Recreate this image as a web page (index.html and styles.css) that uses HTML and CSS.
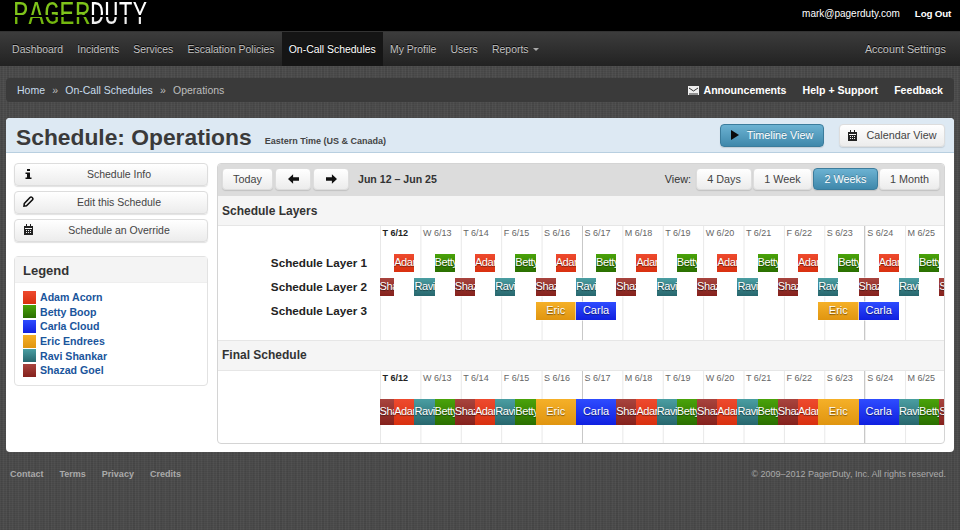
FILE: index.html
```html
<!DOCTYPE html>
<html lang="en">
<head>
    <meta charset="UTF-8">
    <title>Schedule: Operations - PagerDuty</title>
    <link rel="stylesheet" href="styles.css">
</head>
<body>

<!-- Top bar -->
<div class="topbar">
    <div class="logo"><span class="logo-pager">PAGER</span><span class="logo-duty">DUTY</span></div>
    <div class="user">
        <a href="#" class="user-mail">mark@pagerduty.com</a>
        <a href="#" class="logout">Log Out</a>
    </div>
</div>

<!-- Main nav -->
<div class="nav">
    <a href="#">Dashboard</a>
    <a href="#">Incidents</a>
    <a href="#">Services</a>
    <a href="#">Escalation Policies</a>
    <a href="#" class="active">On-Call Schedules</a>
    <a href="#">My Profile</a>
    <a href="#">Users</a>
    <a href="#">Reports <span class="caret"></span></a>
    <a href="#" class="nav-right">Account Settings</a>
</div>

<!-- Breadcrumb -->
<div class="crumbs">
    <a href="#">Home</a><span class="sep">»</span>
    <a href="#">On-Call Schedules</a><span class="sep">»</span>
    <span class="current">Operations</span>
    <div class="crumb-links">
        <a href="#">
            <svg class="mail-icon" width="11" height="9" viewBox="0 0 11 9"><path fill="#eee" d="M0 0h11v9H0z"/><path fill="none" stroke="#333" d="M1 2l4.500 3L10 2M1 8h9"/></svg>Announcements</a>
        <a href="#">Help + Support</a>
        <a href="#">Feedback</a>
    </div>
</div>

<div class="card">
    <div class="card-head">
        <h1>Schedule: Operations</h1>
        <span class="timezone">Eastern Time (US &amp; Canada)</span>
        <div class="view-switch">
            <a href="#" class="btn btn-blue btn-timeline">
                <svg width="8" height="10" viewBox="0 0 8 10"><path fill="#0a0a0a" d="M0 0l8 5-8 5z"/></svg>Timeline View</a>
            <a href="#" class="btn btn-calendar">
                <svg width="11" height="11" viewBox="0 0 11 11"><path fill="#222" d="M1 2h2V0h1v2h3V0h1v2h2v9H1zM2 4v1h7V4zM3 6v1h1V6zm2 0v1h1V6zm2 0v1h1V6zM3 8v1h1V8zm2 0v1h1V8zm2 0v1h1V8z"/></svg>Calendar View</a>
        </div>
    </div>

    <div class="card-body">
        <!-- Sidebar -->
        <div class="sidebar">
            <a href="#" class="btn side-btn">
                <svg width="11" height="10" viewBox="-2.500 0 11 10"><path fill="#111" d="M1.500 0h3v2h-3zM0 3.500h4.500V8.500H6V10H0V8.500h1.500V5H0z"/></svg>
                <span>Schedule Info</span></a>
            <a href="#" class="btn side-btn">
                <svg width="11" height="11" viewBox="0 0 11 11"><path fill="none" stroke="#111" stroke-width="1.600" d="M1.300 7.500L7 1.500q1-1 2.200 0t.3 2.300L3.500 9.700 1 10z"/></svg>
                <span>Edit this Schedule</span></a>
            <a href="#" class="btn side-btn">
                <svg width="11" height="11" viewBox="0 0 11 11"><path fill="#222" d="M1 2h2V0h1v2h3V0h1v2h2v9H1zM2 4v1h7V4zM3 6v1h1V6zm2 0v1h1V6zm2 0v1h1V6zM3 8v1h1V8zm2 0v1h1V8zm2 0v1h1V8z"/></svg>
                <span>Schedule an Override</span></a>

            <div class="legend">
                <h3>Legend</h3>
                <ul>
                    <li><i class="adam"></i><a href="#">Adam Acorn</a></li>
                    <li><i class="betty"></i><a href="#">Betty Boop</a></li>
                    <li><i class="carla"></i><a href="#">Carla Cloud</a></li>
                    <li><i class="eric"></i><a href="#">Eric Endrees</a></li>
                    <li><i class="ravi"></i><a href="#">Ravi Shankar</a></li>
                    <li><i class="shazad"></i><a href="#">Shazad Goel</a></li>
                </ul>
            </div>
        </div>

        <!-- Schedule panel -->
        <div class="panel">
            <div class="toolbar">
                <a href="#" class="btn btn-today">Today</a>
                <a href="#" class="btn btn-arrow"><svg width="11" height="10" viewBox="0 0 14 12"><path fill="#111" d="M6.500 0v3.700H14v4.600H6.500V12L0 6z"/></svg></a>
                <a href="#" class="btn btn-arrow"><svg width="11" height="10" viewBox="0 0 14 12"><path fill="#111" d="M7.500 0v3.700H0v4.600h7.500V12L14 6z"/></svg></a>
                <span class="range">Jun 12 – Jun 25</span>
                <span class="view-label">View:</span>
                <div class="range-btns">
                    <a href="#" class="btn">4 Days</a>
                    <a href="#" class="btn">1 Week</a>
                    <a href="#" class="btn btn-blue">2 Weeks</a>
                    <a href="#" class="btn">1 Month</a>
                </div>
            </div>

            <div class="section-head">Schedule Layers</div>
            <div class="section layers">
                <div class="names">
                    <div>Schedule Layer 1</div>
                    <div>Schedule Layer 2</div>
                    <div>Schedule Layer 3</div>
                </div>
                <div class="timeline">
                    <div class="days">
                        <span class="today">T 6/12</span><span>W 6/13</span><span>T 6/14</span><span>F 6/15</span><span>S 6/16</span><span>S 6/17</span><span>M 6/18</span><span>T 6/19</span><span>W 6/20</span><span>T 6/21</span><span>F 6/22</span><span>S 6/23</span><span>S 6/24</span><span>M 6/25</span>
                    </div>
                    <div class="track">
                        <s></s><b class="adam">Adam</b><s></s><b class="betty">Betty</b><s></s><b class="adam">Adam</b><s></s><b class="betty">Betty</b><s></s><b class="adam">Adam</b><s></s><b class="betty">Betty</b><s></s><b class="adam">Adam</b><s></s><b class="betty">Betty</b><s></s><b class="adam">Adam</b><s></s><b class="betty">Betty</b><s></s><b class="adam">Adam</b><s></s><b class="betty">Betty</b><s></s><b class="adam">Adam</b><s></s><b class="betty">Betty</b>
                    </div>
                    <div class="track">
                        <b class="shazad">Shazad</b><s></s><b class="ravi">Ravi</b><s></s><b class="shazad">Shazad</b><s></s><b class="ravi">Ravi</b><s></s><b class="shazad">Shazad</b><s></s><b class="ravi">Ravi</b><s></s><b class="shazad">Shazad</b><s></s><b class="ravi">Ravi</b><s></s><b class="shazad">Shazad</b><s></s><b class="ravi">Ravi</b><s></s><b class="shazad">Shazad</b><s></s><b class="ravi">Ravi</b><s></s><b class="shazad">Shazad</b><s></s><b class="ravi">Ravi</b><s></s><b class="shazad">Shazad</b>
                    </div>
                    <div class="track">
                        <s class="skip8"></s><b class="eric wide">Eric</b><b class="carla wide">Carla</b><s class="skip10"></s><b class="eric wide">Eric</b><b class="carla wide">Carla</b>
                    </div>
                </div>
            </div>

            <div class="section-head final-head">Final Schedule</div>
            <div class="section final">
                <div class="names"></div>
                <div class="timeline">
                    <div class="days">
                        <span class="today">T 6/12</span><span>W 6/13</span><span>T 6/14</span><span>F 6/15</span><span>S 6/16</span><span>S 6/17</span><span>M 6/18</span><span>T 6/19</span><span>W 6/20</span><span>T 6/21</span><span>F 6/22</span><span>S 6/23</span><span>S 6/24</span><span>M 6/25</span>
                    </div>
                    <div class="track track-final">
                        <b class="shazad">Shazad</b><b class="adam">Adam</b><b class="ravi">Ravi</b><b class="betty">Betty</b><b class="shazad">Shazad</b><b class="adam">Adam</b><b class="ravi">Ravi</b><b class="betty">Betty</b><b class="eric wide">Eric</b><b class="carla wide">Carla</b><b class="shazad">Shazad</b><b class="adam">Adam</b><b class="ravi">Ravi</b><b class="betty">Betty</b><b class="shazad">Shazad</b><b class="adam">Adam</b><b class="ravi">Ravi</b><b class="betty">Betty</b><b class="shazad">Shazad</b><b class="adam">Adam</b><b class="eric wide">Eric</b><b class="carla wide">Carla</b><b class="ravi">Ravi</b><b class="betty">Betty</b><b class="shazad">Shazad</b>
                    </div>
                </div>
            </div>
        </div>
    </div>
</div>

<!-- Footer -->
<div class="footer">
    <a href="#">Contact</a>
    <a href="#">Terms</a>
    <a href="#">Privacy</a>
    <a href="#">Credits</a>
    <span class="copyright">© 2009–2012 PagerDuty, Inc. All rights reserved.</span>
</div>

</body>
</html>
```

FILE: styles.css
```css
/* General */
body {
    margin: 0;
    height: 530px;
    overflow: hidden;
    font-family: "Liberation Sans", Arial, sans-serif;
    font-size: 11px;
    color: #333;
    background-color: #4c4c4c;
    background-image:
        repeating-linear-gradient(90deg, rgba(255, 255, 255, 0.03) 0 1px, transparent 1px 3px),
        repeating-linear-gradient(90deg, rgba(0, 0, 0, 0.04) 0 2px, transparent 2px 7px),
        repeating-linear-gradient(0deg, rgba(0, 0, 0, 0.07) 0 1px, transparent 1px 2px);
}

a {
    color: inherit;
    text-decoration: none;
}

/* Top bar */
.topbar {
    height: 31px;
    background-color: #000;
    display: flex;
    align-items: center;
    justify-content: space-between;
    padding: 0 9px 0 13px;
}

/* Logo is real text, squeezed and cut by a gradient to look like an LCD */
.logo {
    display: flex;
    font-family: "Liberation Mono", monospace;
    font-size: 33px;
    line-height: 28px;
    height: 28px;
}

.logo span {
    display: block;
    white-space: nowrap;
    transform-origin: left center;
    -webkit-background-clip: text;
    background-clip: text;
    color: transparent;
}

.logo-pager {
    width: 100px;
    margin-right: -23px;
    transform: scaleX(0.78);
    background-image: linear-gradient(#7fc41a 0 48%, #000 48% 53%, #74b80f 53%);
}

.logo-duty {
    width: 80px;
    transform: scaleX(0.72);
    background-image: linear-gradient(#fff 0 48%, #000 48% 53%, #eee 53%);
}

.user {
    display: flex;
    gap: 15px;
    color: #fff;
    font-size: 10px;
    padding-bottom: 5px;
}

.logout {
    font-weight: bold;
    font-size: 9.800px;
    letter-spacing: -0.200px;
}

/* Nav */
.nav {
    height: 35px;
    display: flex;
    padding-left: 5px;
    background: linear-gradient(#3c3c3c, #222);
    border-top: 1px solid #333;
    box-sizing: border-box;
    color: #c2c2c2;
    text-shadow: 0 -1px 0 #000;
}

.nav a {
    padding: 0 7.100px;
    line-height: 36px;
    font-size: 10.450px;
}

.nav a.active {
    background-color: #151515;
    color: #fff;
}

.nav a.nav-right {
    margin-left: auto;
    margin-right: 7px;
    font-size: 10.800px;
    line-height: 35px;
}

.caret {
    display: inline-block;
    border: 3px solid transparent;
    border-top-color: #aaa;
    border-bottom: 0;
    margin: 0 0 2px 2px;
}

/* Breadcrumb */
.crumbs {
    margin: 12px 6px 0;
    height: 24px;
    padding: 0 11px;
    display: flex;
    align-items: center;
    background-color: #3a3a3a;
    border-radius: 4px;
    color: #c8dcec;
    font-size: 10.500px;
}

.sep {
    margin: 0 7.200px;
    color: #bbb;
}

.current {
    color: #bdbdbd;
}

.crumb-links {
    margin-left: auto;
    display: flex;
    gap: 16px;
    color: #fff;
    font-weight: bold;
    font-size: 10.600px;
}

.mail-icon {
    margin-right: 4px;
    vertical-align: -1px;
}

/* Card */
.card {
    margin: 16px 6px 0;
    height: 334px;
    background-color: #fff;
    border-radius: 4px;
    overflow: hidden;
}

.card-head {
    height: 35px;
    box-sizing: border-box;
    background-color: #dde9f3;
    border-bottom: 1px solid #b8cfe0;
    display: flex;
    align-items: center;
    padding-left: 10px;
}

.card-head h1 {
    margin: 4px 0 0;
    font-size: 22.800px;
    color: #3a3a3a;
}

.timezone {
    margin: 11px 0 0 13px;
    font-size: 9px;
    font-weight: bold;
    color: #444;
}

.view-switch {
    margin-left: auto;
    margin-right: 9px;
    display: flex;
    gap: 15px;
}

/* Buttons */
.btn {
    display: flex;
    align-items: center;
    justify-content: center;
    box-sizing: border-box;
    background: linear-gradient(#fff, #ececec);
    border: 1px solid #ddd;
    border-radius: 4px;
    box-shadow: 0 1px 1px rgba(0, 0, 0, 0.12);
    color: #444;
    font-size: 10.800px;
}

.btn-blue {
    background: linear-gradient(#6cb2d2, #3f88ab);
    border-color: #3b7c9c;
    color: #fff;
    text-shadow: 0 -1px 0 rgba(0, 0, 0, 0.25);
}

.btn-timeline {
    width: 104px;
    height: 23px;
    gap: 8px;
}

.btn-calendar {
    width: 106px;
    height: 23px;
    gap: 8px;
}

/* Body */
.card-body {
    display: flex;
    gap: 9px;
    padding: 10px 9px 0 8px;
}

.sidebar {
    width: 194px;
    flex: none;
    display: flex;
    flex-direction: column;
    gap: 5px;
}

.side-btn {
    height: 23px;
    padding: 0 0 2px 8px;
    font-size: 10.500px;
}

.side-btn svg {
    flex: none;
}

.side-btn span {
    flex: 1;
    text-align: center;
    padding-right: 3px;
}

.legend {
    margin-top: 9px;
    height: 130px;
    box-sizing: border-box;
    border: 1px solid #e2e2e2;
    border-radius: 4px;
}

.legend h3 {
    margin: 0;
    height: 25px;
    line-height: 27px;
    padding-left: 8px;
    font-size: 13px;
    color: #333;
    background-color: #f4f4f4;
    border-bottom: 1px solid #eee;
}

.legend ul {
    list-style: none;
    margin: 0;
    padding: 7px 8px;
}

.legend li {
    display: flex;
    align-items: center;
    gap: 4px;
    height: 14.600px;
    font-weight: bold;
    color: #1a559c;
    font-size: 10.600px;
}

.legend i {
    width: 13px;
    height: 13px;
}

/* Schedule panel */
.panel {
    width: 728px;
    height: 281px;
    box-sizing: border-box;
    border: 1px solid #d4d4d4;
    border-radius: 4px;
    overflow: hidden;
}

.toolbar {
    height: 32px;
    box-sizing: border-box;
    display: flex;
    align-items: center;
    padding: 0 4px 2px;
    background-color: #dcdcdc;
    font-size: 10.800px;
}

.toolbar .btn {
    height: 22px;
}

.btn-today {
    width: 51px;
}

.btn-arrow {
    width: 36px;
    margin-left: 2px;
}

.range {
    margin-left: 9px;
    font-weight: bold;
    font-size: 10.600px;
    color: #333;
}

.view-label {
    margin-left: auto;
    margin-right: 5px;
}

.range-btns {
    display: flex;
    gap: 1px;
}

.range-btns .btn:nth-child(1) { width: 56px; }
.range-btns .btn:nth-child(2) { width: 59px; }
.range-btns .btn:nth-child(3) { width: 65px; }
.range-btns .btn:nth-child(4) { width: 61px; }

.section-head {
    height: 30px;
    box-sizing: border-box;
    line-height: 30px;
    padding-left: 4px;
    font-size: 12px;
    font-weight: bold;
    color: #333;
    background-color: #f5f5f5;
    border-bottom: 1px solid #e6e6e6;
}

.final-head {
    height: 31px;
    line-height: 28px;
    border-top: 1px solid #e6e6e6;
}

.section {
    display: flex;
    height: 114px;
}

.section.final {
    height: 73px;
}

.names {
    width: 161.500px;
    flex: none;
    padding-top: 25px;
    box-sizing: border-box;
    font-size: 11.700px;
    font-weight: bold;
    color: #222;
    text-align: right;
}

.names div {
    height: 24px;
    line-height: 24px;
    padding-right: 12.500px;
}

/* Day lines are painted on the timeline, week lines darker */
.timeline {
    flex: 1;
    min-width: 0;
    background-image:
        linear-gradient(#c8c8c8, #c8c8c8),
        linear-gradient(#c8c8c8, #c8c8c8),
        linear-gradient(90deg, #e8e8e8 1px, transparent 1px);
    background-size: 1px 100%, 1px 100%, 40.400px 100%;
    background-position: 202px 0, 484.800px 0, 0 0;
    background-repeat: no-repeat, no-repeat, repeat-x;
}

.days {
    display: grid;
    grid-template-columns: repeat(14, 40.400px);
    height: 28px;
    line-height: 14px;
    font-size: 9px;
    color: #666;
}

.days span {
    padding-left: 3px;
}

.days .today {
    font-weight: bold;
    color: #222;
}

.track {
    display: grid;
    grid-template-columns: 14.700px repeat(27, 20.200px) 1fr;
    height: 18px;
    margin-bottom: 6px;
}

.track b {
    display: block;
    overflow: hidden;
    white-space: nowrap;
    text-align: center;
    font-size: 11px;
    font-weight: normal;
    letter-spacing: -0.400px;
    line-height: 17px;
    color: #fff;
    text-shadow: 0 1px 1px rgba(0, 0, 0, 0.5);
    box-shadow: 0 0 0 1px rgba(255, 255, 255, 0.5);
}

.track b.wide {
    grid-column: span 2;
    letter-spacing: 0;
}

.skip8 { grid-column: span 8; }
.skip10 { grid-column: span 10; }

.track-final {
    height: 26px;
}

.track-final b {
    line-height: 25px;
    box-shadow: none;
}

/* Colours of each person */
.adam { background: linear-gradient(#ee4a2e, #d9300f); }
.betty { background: linear-gradient(#4aa30a, #2a6f00); }
.carla { background: linear-gradient(#2e4cff, #1020e0); }
.eric { background: linear-gradient(#f5b028, #e09510); }
.ravi { background: linear-gradient(#4a9ea2, #27666d); }
.shazad { background: linear-gradient(#a8443e, #85211c); }

/* Footer */
.footer {
    display: flex;
    gap: 16px;
    padding: 17px 14px 0 10px;
    font-size: 9px;
    font-weight: bold;
    color: #aaa;
}

.copyright {
    margin-left: auto;
    font-weight: normal;
}
```
